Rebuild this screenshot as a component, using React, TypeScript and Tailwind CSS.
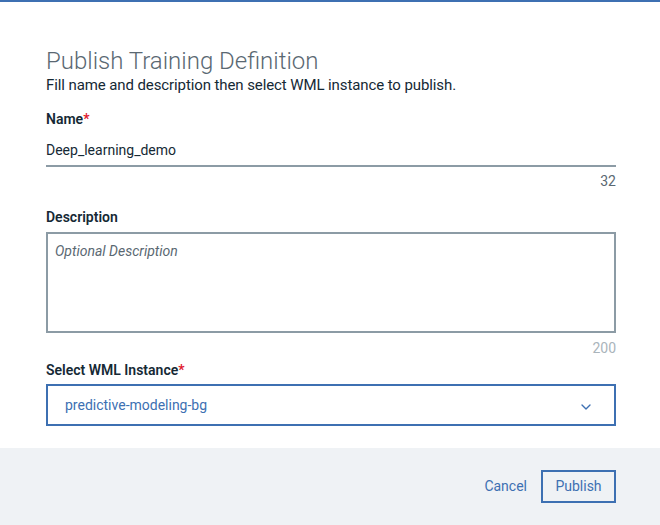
import { ChevronDown } from "lucide-react";

export default function App() {
  return (
    <div className="w-[660px] h-[525px] bg-white flex flex-col font-['Roboto',sans-serif] text-[#152935] overflow-hidden">
      <div className="h-[2px] bg-[#3d70b2]" />
      <div className="flex-1 pl-[46px] pr-[44px] pt-[45px]">
        <h1 className="text-[24px] leading-[28px] font-light text-[#5a6872]">
          Publish Training Definition
        </h1>
        <p className="text-[15px] leading-[20px] tracking-[-0.1px]">
          Fill name and description then select WML instance to publish.
        </p>

        <label className="block mt-[15px] text-[14px] leading-[18px] font-semibold">
          Name<span className="text-[#e0182d]">*</span>
        </label>
        <div className="mt-[12px] border-b-2 border-[#8c9ba5] pb-[5px] text-[14px] leading-[20px]">
          Deep_learning_demo
        </div>
        <div className="mt-[5px] text-right text-[14px] leading-[18px] text-[#5a6872]">32</div>

        <label className="block mt-[18px] text-[14px] leading-[18px] font-semibold">
          Description
        </label>
        <div className="mt-[6px] h-[101px] border-2 border-[#8c9ba5] px-[7px] py-[7px] text-[14px] italic leading-[20px] text-[#5a6872]">
          Optional Description
        </div>
        <div className="mt-[6px] text-right text-[14px] leading-[18px] text-[#aab4bb]">200</div>

        <label className="block mt-[4px] text-[14px] leading-[18px] font-semibold">
          Select WML Instance<span className="text-[#e0182d]">*</span>
        </label>
        <div className="mt-[5px] h-[42px] border-2 border-[#3d70b2] flex items-center justify-between pl-[17px] pr-[20px] text-[14px] text-[#3d70b2]">
          <span>predictive-modeling-bg</span>
          <ChevronDown size={16} strokeWidth={2} className="mt-[4px]" />
        </div>
      </div>
      <div className="h-[77px] bg-[#eff2f5] flex items-center justify-end gap-[14px] pl-[44px] pr-[44px]">
        <button className="text-[14px] text-[#3d70b2]">Cancel</button>
        <button className="h-[33px] w-[75px] border-2 border-[#3d70b2] text-[14px] text-[#3d70b2]">
          Publish
        </button>
      </div>
    </div>
  );
}
